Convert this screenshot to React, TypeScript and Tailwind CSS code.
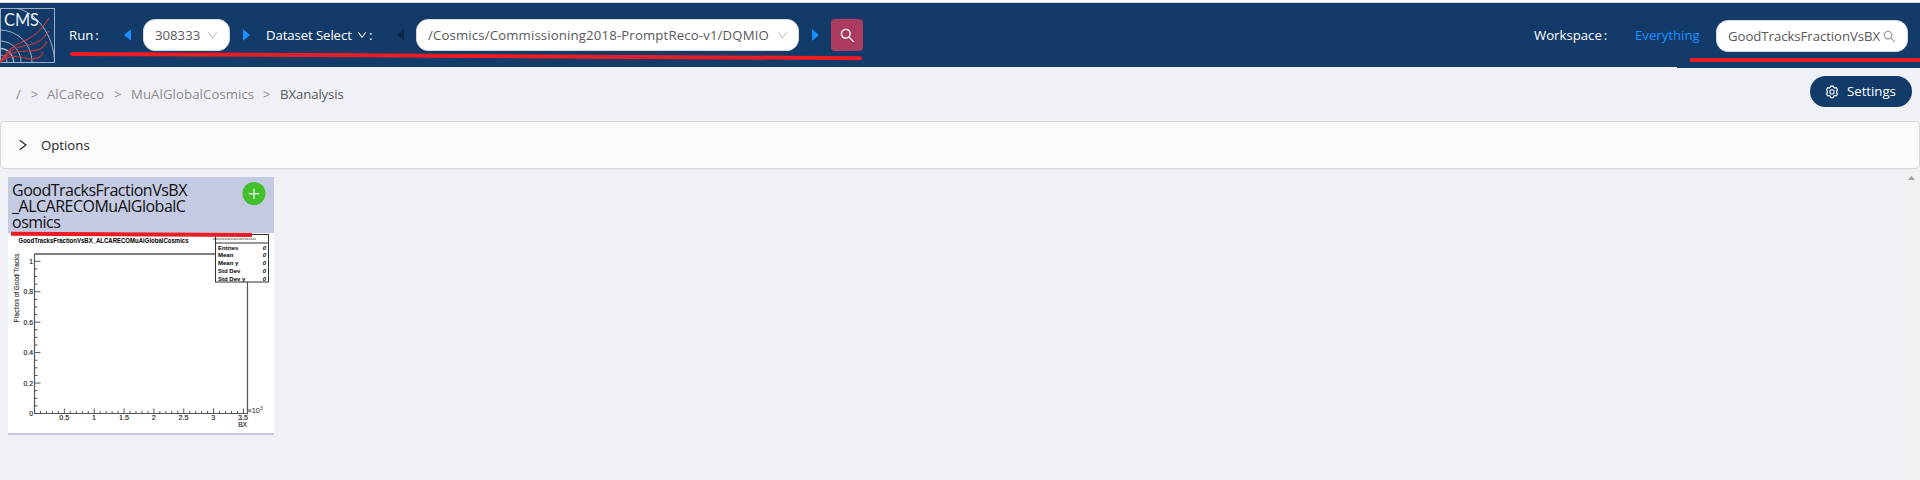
import React from "react";

const DownIcon = ({ className }: { className: string }) => (
  <svg viewBox="64 64 896 896" fill="currentColor" className={className}>
    <path d="M884 256h-75c-5.1 0-9.9 2.5-12.9 6.6L512 654.200 227.900 262.600c-3-4.100-7.800-6.600-12.900-6.600h-75c-6.500 0-10.300 7.400-6.500 12.700l352.600 486.100c12.800 17.600 39 17.600 51.700 0l352.600-486.100c3.900-5.300.1-12.700-6.400-12.700z" />
  </svg>
);

const SearchIcon = ({ className }: { className: string }) => (
  <svg viewBox="64 64 896 896" fill="currentColor" className={className}>
    <path d="M909.600 854.500L649.900 594.800C690.200 542.700 712 479 712 412c0-80.200-31.300-155.400-87.900-212.100-56.600-56.700-132-87.900-212.100-87.900s-155.500 31.300-212.100 87.900C143.200 256.500 112 331.800 112 412c0 80.100 31.300 155.500 87.900 212.100C256.500 680.800 331.800 712 412 712c67 0 130.600-21.800 182.700-62l259.700 259.600a8.200 8.200 0 0 0 11.600 0l43.600-43.500a8.200 8.200 0 0 0 0-11.600zM570.400 570.400C528 612.700 471.800 636 412 636s-116-23.300-158.400-65.600C211.300 528 188 471.800 188 412s23.300-116.100 65.600-158.400C296 211.300 352.200 188 412 188s116.100 23.200 158.400 65.600S636 352.200 636 412s-23.300 116.100-65.600 158.400z" />
  </svg>
);

const GearIcon = () => (
  <svg viewBox="0 0 14 14" fill="none" stroke="white" strokeWidth="1.100" className="size-[14px]">
    <path d="M5.300 1.900 5.700.6h2.600l.4 1.300 1.200.7 1.400-.4 1.300 2.300-1 1v1.500l1 1-1.300 2.300-1.400-.3-1.200.7-.4 1.500H5.700l-.4-1.500-1.200-.7-1.400.3L1.400 8l1-1V5.500l-1-1 1.300-2.300 1.400.4z" transform="translate(0 .5)" />
    <circle cx="7" cy="6.900" r="2.100" />
  </svg>
);

const Caret = ({ dir, className }: { dir: "left" | "right"; className: string }) => (
  <svg viewBox="0 0 7 12" fill="currentColor" className={className}>
    <path d={dir === "left" ? "M7 .3v11.400L0 6z" : "M0 .3v11.400L7 6z"} />
  </svg>
);

const Logo = () => (
  <svg viewBox="0 0 55 55" className="size-[55px] shrink-0" fill="none">
    <g stroke="#a9bccf" strokeWidth="0.900">
      <rect x="0.500" y="0.500" width="54" height="54" />
      <circle cx="0" cy="54" r="7" />
      <circle cx="0" cy="54" r="13.500" strokeWidth="1.300" />
      <circle cx="0" cy="54" r="21" />
      <circle cx="0" cy="54" r="32" />
      <path d="M17 .5C36 4 54 27 54.500 54" />
    </g>
    <g stroke="#c5393b" strokeWidth="1.100">
      <path d="M0 54C11 37 18 36 28 31S43 19 49 10" />
      <path d="M0 54C10 41 17 39 28 37S42 32 49 23" />
      <path d="M0 54C10 44 17 43 27 43S43 42 47 33" />
      <path d="M0 54C9 47 16 48 25 50S41 51 43 44" />
      <path d="M0 54l7-8" strokeWidth="2" />
    </g>
    <text x="4" y="18" fontSize="16.500" fill="#e8edf3" fontFamily="Lato, sans-serif" textLength="35" lengthAdjust="spacingAndGlyphs">CMS</text>
  </svg>
);

const X0 = 26.500;
const Y0 = 180.500;
const xLabels = ["0.5", "1", "1.5", "2", "2.5", "3", "3.5"];
const yLabels = ["0", "0.2", "0.4", "0.6", "0.8", "1"];
const stats = ["Entries", "Mean", "Mean y", "Std Dev", "Std Dev y"];

const Plot = () => (
  <svg viewBox="0 0 266 200" className="block h-[200px] w-[266px] bg-white" fontFamily="Liberation Sans, sans-serif" fill="#222">
    <text x="10.500" y="9.500" fontSize="6.300" fontWeight="bold" textLength="170" lengthAdjust="spacingAndGlyphs" fill="#000">GoodTracksFractionVsBX_ALCARECOMuAlGlobalCosmics</text>
    <g stroke="#555" strokeWidth="1" fill="none">
      <path d="M26.500 180.500V21" strokeWidth="1.200" />
      <path d="M26.500 21H208" strokeWidth="1.700" />
      <path d="M239.500 49V180.500H26.500" strokeWidth="1.200" />
      {Array.from({ length: 21 }, (_, i) => (
        <path key={i} d={`M${X0} ${Y0 - i * 7.610}h${i % 4 === 0 ? 6 : 3}`} />
      ))}
      {Array.from({ length: 36 }, (_, i) => (
        <path key={i} d={`M${X0 + i * 5.970} ${Y0}v${i % 5 === 0 ? -5 : -2.500}`} />
      ))}
    </g>
    {xLabels.map((t, i) => (
      <text key={t} x={X0 + (i + 1) * 29.800} y="187" fontSize="7.200" textAnchor="middle" stroke="#222" strokeWidth="0.150">{t}</text>
    ))}
    {yLabels.map((t, i) => (
      <text key={t} x="25" y={183 - i * 30.440} fontSize="6.800" textAnchor="end" stroke="#222" strokeWidth="0.150">{t}</text>
    ))}
    <text x="239" y="194" fontSize="6.600" textAnchor="end" stroke="#222" strokeWidth="0.150">BX</text>
    <text x="239.500" y="180" fontSize="7.300">×10<tspan fontSize="5" dy="-3">3</tspan></text>
    <text transform="translate(10.500 89.500) rotate(-90)" fontSize="7" textLength="69" lengthAdjust="spacingAndGlyphs" stroke="#222" strokeWidth="0.100">Fraction of Good Tracks</text>
    <g stroke="#333" strokeWidth="1">
      <rect x="207.500" y="1.500" width="53" height="47.500" fill="white" />
      <path d="M207 10h54" />
      <path d="M205 6h43" strokeDasharray="2 .5 3 .4" strokeWidth=".8" />
    </g>
    {stats.map((t, i) => (
      <g key={t} fontWeight="bold" fontSize="6" fill="#000">
        <text x="210" y={16.500 + i * 7.800}>{t}</text>
        <text x="258" y={16.500 + i * 7.800} textAnchor="end" fontStyle="italic">0</text>
      </g>
    ))}
  </svg>
);

export default function App() {
  return (
    <div className="relative flex h-[480px] w-[1920px] flex-col overflow-hidden bg-[#f0f1f6] font-['Open_Sans',sans-serif] text-[13.200px] whitespace-nowrap text-[#595959]">
      <div className="h-[3px] shrink-0 border-b border-[#d5d5d5] bg-white" />
      <header className="flex h-16 shrink-0 items-center bg-[#133b69] text-white">
        <Logo />
        <div className="ml-[14px] w-[55px] pt-px font-medium">Run<span className="ml-0.5">:</span></div>
        <Caret dir="left" className="h-3 w-[7px] text-[#1890ff]" />
        <div className="ml-3 flex h-8 w-[87px] items-center justify-between rounded-xl border border-[#d9d9d9] bg-white pr-[11px] pl-[11px] text-[#595959]">
          <span className="pt-px">308333</span>
          <DownIcon className="size-[11px] text-[#bfbfbf]" />
        </div>
        <Caret dir="right" className="ml-[13px] h-3 w-[7px] text-[#1890ff]" />
        <div className="ml-4 flex w-[131px] items-center pt-px font-medium">
          <span className="w-[91px] tracking-[-0.100px]">Dataset Select</span>
          <DownIcon className="size-[10px]" />
          <span className="ml-0.5">:</span>
        </div>
        <Caret dir="left" className="h-3 w-[7px] text-[#0d2a4a]" />
        <div className="ml-3 flex h-8 w-[383px] items-center justify-between rounded-xl border border-[#d9d9d9] bg-white pr-[10px] pl-[11px] text-[#595959]">
          <span className="pt-px tracking-[0.150px]">/Cosmics/Commissioning2018-PromptReco-v1/DQMIO</span>
          <DownIcon className="size-[11px] text-[#bfbfbf]" />
        </div>
        <Caret dir="right" className="ml-[13px] h-3 w-[7px] text-[#1890ff]" />
        <button className="ml-3 flex size-8 items-center justify-center rounded bg-[#ab3b61]">
          <SearchIcon className="size-[15px]" />
        </button>
        <div className="ml-[671px] w-[101px] pt-px font-medium">Workspace<span className="ml-0.5">:</span></div>
        <div className="w-[81px] pt-0.5 text-[#1890ff]">Everything</div>
        <div className="mt-[2px] flex h-8 w-[192px] items-center rounded-xl border border-[#d9d9d9] bg-white pl-[11px] text-[#595959]">
          <span className="w-[151px] pt-px tracking-[-0.050px]">GoodTracksFractionVsBX</span>
          <SearchIcon className="ml-[4px] size-[13px] text-[#999]" />
        </div>
      </header>

      <div className="flex h-[54px] shrink-0 items-start justify-between pr-2 pl-4">
        <nav className="flex pt-[18px] text-[#8c8c8c]">
          <span className="w-[15px]">/</span>
          <span className="w-4">&gt;</span>
          <span className="w-[67px]">AlCaReco</span>
          <span className="w-[17px]">&gt;</span>
          <span className="w-[132px] tracking-[0.080px]">MuAlGlobalCosmics</span>
          <span className="w-[17px]">&gt;</span>
          <span className="tracking-[-0.100px] text-[#595959]">BXanalysis</span>
        </nav>
        <button className="mt-[9px] flex h-[31px] w-[102px] items-center rounded-full bg-[#133b69] pl-[15px] text-white">
          <GearIcon />
          <span className="ml-2 pt-px">Settings</span>
        </button>
      </div>

      <div className="flex h-12 shrink-0 items-center rounded-sm border border-[#d9d9d9] bg-[#fafafa] pl-[18px] text-[#262626]">
        <svg viewBox="0 0 8 12" className="h-3 w-2" fill="none" stroke="currentColor" strokeWidth="1.200"><path d="M.7 1.300 7 6 .7 10.700" /></svg>
        <span className="ml-[14px] pt-px">Options</span>
      </div>

      <main className="flex min-h-0 flex-1 justify-between pl-2">
        <article className="mt-2 h-[258px] w-[266px] border-b-2 border-[#c5cae3] bg-white">
          <div className="flex h-14 justify-between bg-[#c5cae3] pt-1 pr-2 pl-1 text-[16px] leading-4 text-[#111]">
            <h2 className="pt-px tracking-[-0.500px]">GoodTracksFractionVsBX<br />_ALCARECOMuAlGlobalC<br />osmics</h2>
            <svg viewBox="0 0 24 24" className="size-6"><circle cx="12" cy="12.500" r="11.500" fill="#41c02c" /><path d="M12 7.500v10.500M6.800 12.700h10.500" stroke="#d5efcf" strokeWidth="1.400" /></svg>
          </div>
          <Plot />
        </article>
        <div className="flex w-[17px] justify-center bg-[#f1f1f1] pt-[7px]">
          <svg viewBox="0 0 7 4" className="h-1 w-[7px]" fill="#a3a3a3"><path d="M0 4 3.500 0 7 4z" /></svg>
        </div>
      </main>

      <svg viewBox="0 0 1920 480" className="pointer-events-none absolute inset-0 h-[480px] w-[1920px]">
        <path d="M1677 67h243v1h-243z" fill="#133b69" />
        <g stroke="#ea1c24" strokeWidth="4" fill="none">
          <path d="M72 54 400 55.500 860 58.200" strokeLinecap="round" />
          <path d="M1690 60h230" />
          <path d="M11 233.800 252 235" />
        </g>
      </svg>
    </div>
  );
}
